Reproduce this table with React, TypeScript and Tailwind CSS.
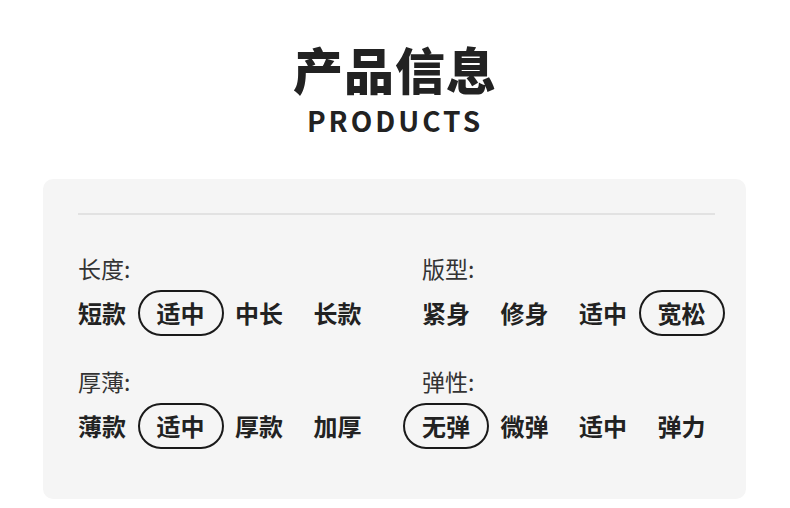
const groups = [
  [
    { label: "长度", options: ["短款", "适中", "中长", "长款"], active: 1 },
    { label: "版型", options: ["紧身", "修身", "适中", "宽松"], active: 3 },
  ],
  [
    { label: "厚薄", options: ["薄款", "适中", "厚款", "加厚"], active: 1 },
    { label: "弹性", options: ["无弹", "微弹", "适中", "弹力"], active: 0 },
  ],
]

function Group({ label, options, active }: { label: string; options: string[]; active: number }) {
  return (
    <div>
      <div className="text-[23px] leading-[26px] text-[#333]">{label}:</div>
      <div className="mt-[9px] flex gap-[30.5px]">
        {options.map((o, i) => (
          <div key={o + i} className="w-12 h-[46px] flex items-center justify-center shrink-0">
            {i === active ? (
              <span className="h-[46px] shrink-0 flex items-center px-[17px] rounded-full border-2 border-[#1a1a1a] text-[24px] font-bold text-[#222] whitespace-nowrap">
                {o}
              </span>
            ) : (
              <span className="text-[24px] font-bold text-[#222] whitespace-nowrap">{o}</span>
            )}
          </div>
        ))}
      </div>
    </div>
  )
}

export default function App() {
  return (
    <div
      className="w-[790px] h-[508px] bg-white flex flex-col items-center"
      style={{ fontFamily: '"Noto Sans CJK SC", "Noto Sans", sans-serif' }}
    >
      <h1 className="mt-[44px] text-[50px] leading-[48px] font-black text-[#222] tracking-[1px]">产品信息</h1>
      <p className="mt-[14px] text-[28px] leading-[28px] font-bold text-[#222] tracking-[3px]">PRODUCTS</p>
      <section className="mt-[45px] w-[703px] h-[320px] self-start ml-[43px] rounded-[10px] bg-[#f5f5f5] pl-[35px] pr-[31px] pt-[34px]">
        <div className="h-[2px] bg-[#e2e2e2]" />
        <div className="mt-[40px] flex flex-col gap-[32px]">
          {groups.map((row, r) => (
            <div key={r} className="grid grid-cols-[344px_1fr]">
              {row.map((g) => (
                <Group key={g.label} {...g} />
              ))}
            </div>
          ))}
        </div>
      </section>
    </div>
  )
}
